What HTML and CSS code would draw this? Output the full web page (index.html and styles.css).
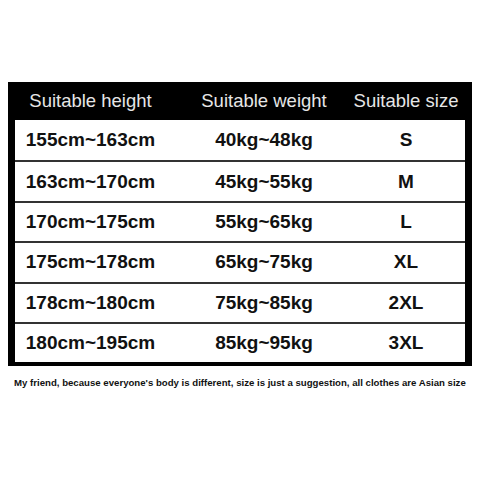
FILE: index.html
```html
<!DOCTYPE html>
<html>
<head>
<meta charset="utf-8">
<link rel="stylesheet" href="styles.css">
</head>
<body>
<div class="page">
  <div class="chart">
    <div class="head">
      <div class="cell">Suitable height</div>
      <div class="cell">Suitable weight</div>
      <div class="cell">Suitable size</div>
    </div>
    <div class="body">
      <div class="row"><div class="cell">155cm~163cm</div><div class="cell">40kg~48kg</div><div class="cell">S</div></div>
      <div class="row"><div class="cell">163cm~170cm</div><div class="cell">45kg~55kg</div><div class="cell">M</div></div>
      <div class="row"><div class="cell">170cm~175cm</div><div class="cell">55kg~65kg</div><div class="cell">L</div></div>
      <div class="row"><div class="cell">175cm~178cm</div><div class="cell">65kg~75kg</div><div class="cell">XL</div></div>
      <div class="row"><div class="cell">178cm~180cm</div><div class="cell">75kg~85kg</div><div class="cell">2XL</div></div>
      <div class="row"><div class="cell">180cm~195cm</div><div class="cell">85kg~95kg</div><div class="cell">3XL</div></div>
    </div>
  </div>
  <p class="note">My friend, because everyone's body is different, size is just a suggestion, all clothes are Asian size</p>
</div>
</body>
</html>
```
FILE: styles.css
```css
html, body {
  margin: 0;
  padding: 0;
  background: #fff;
}
.page {
  width: 480px;
  height: 480px;
  padding-top: 82px;
  box-sizing: border-box;
  font-family: "Liberation Sans", Arial, sans-serif;
}
.chart {
  margin-left: 8px;
  width: 464px;
}
.head {
  height: 38px;
  background: #000;
  color: #e6e6e6;
  font-size: 18.5px;
  display: grid;
  grid-template-columns: 151px 196px 88px 1fr;
  padding-left: 7px;
  align-items: center;
}
.cell {
  justify-self: center;
  white-space: nowrap;
}
.body {
  border: 7px solid #000;
  border-top: 0;
  border-bottom-width: 4px;
  background: #fff;
}
.row {
  height: 38.4px;
  display: grid;
  grid-template-columns: 151px 196px 88px 1fr;
  align-items: center;
  font-weight: bold;
  font-size: 19px;
  color: #111;
}
.row:first-child {
  height: 40.4px;
}
.row + .row {
  border-top: 2px solid #333;
}
.note {
  margin: 11px 0 0 14px;
  font-size: 9.65px;
  font-weight: bold;
  color: #111;
  white-space: nowrap;
}
```
